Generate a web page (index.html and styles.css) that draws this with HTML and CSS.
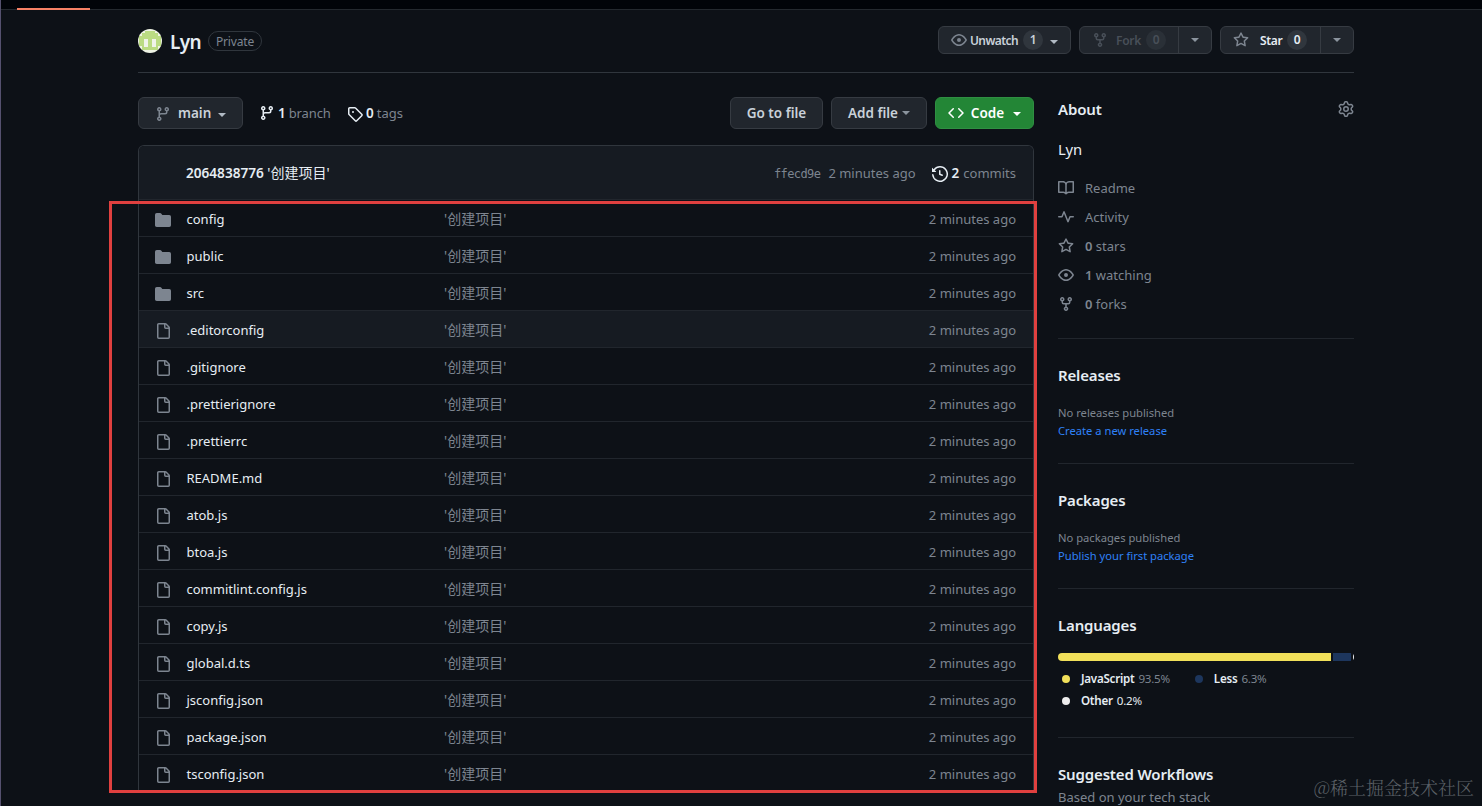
FILE: index.html
```html
<!DOCTYPE html>
<html lang="en">
<head>
<meta charset="utf-8">
<title>Lyn</title>
<link rel="stylesheet" href="styles.css">
</head>
<body>
<svg class="defs" aria-hidden="true">
  <symbol id="branch" viewBox="0 0 16 16"><path d="M9.5 3.25a2.25 2.25 0 1 1 3 2.122V6A2.5 2.5 0 0 1 10 8.5H6a1 1 0 0 0-1 1v1.128a2.251 2.251 0 1 1-1.5 0V5.372a2.25 2.25 0 1 1 1.5 0v1.836A2.493 2.493 0 0 1 6 7h4a1 1 0 0 0 1-1v-.628A2.25 2.25 0 0 1 9.5 3.25Zm-6 0a.75.75 0 1 0 1.5 0 .75.75 0 0 0-1.5 0Zm8.25-.75a.75.75 0 1 0 0 1.5.75.75 0 0 0 0-1.5ZM4.25 12a.75.75 0 1 0 0 1.5.75.75 0 0 0 0-1.5Z"/></symbol>
  <symbol id="tag" viewBox="0 0 16 16"><path d="M1 7.775V2.75C1 1.784 1.784 1 2.75 1h5.025c.464 0 .91.184 1.238.513l6.25 6.25a1.75 1.75 0 0 1 0 2.474l-5.026 5.026a1.75 1.75 0 0 1-2.474 0l-6.25-6.25A1.752 1.752 0 0 1 1 7.775Zm1.5 0c0 .066.026.13.073.177l6.25 6.25a.25.25 0 0 0 .354 0l5.025-5.025a.25.25 0 0 0 0-.354l-6.25-6.25a.25.25 0 0 0-.177-.073H2.75a.25.25 0 0 0-.25.25ZM6 5a1 1 0 1 1 0 2 1 1 0 0 1 0-2Z"/></symbol>
  <symbol id="fork" viewBox="0 0 16 16"><path d="M5 5.372v.878c0 .414.336.75.75.75h4.5a.75.75 0 0 0 .75-.75v-.878a2.25 2.25 0 1 1 1.5 0v.878a2.25 2.25 0 0 1-2.25 2.25h-1.5v2.128a2.251 2.251 0 1 1-1.5 0V8.5h-1.5A2.25 2.25 0 0 1 3.5 6.25v-.878a2.25 2.25 0 1 1 1.5 0ZM5 3.25a.75.75 0 1 0-1.5 0 .75.75 0 0 0 1.5 0Zm6.75.75a.75.75 0 1 0 0-1.5.75.75 0 0 0 0 1.5Zm-3 8.75a.75.75 0 1 0-1.5 0 .75.75 0 0 0 1.5 0Z"/></symbol>
  <symbol id="eye" viewBox="0 0 16 16"><path d="M8 2c1.981 0 3.671.992 4.933 2.078 1.27 1.091 2.187 2.345 2.637 3.023a1.62 1.62 0 0 1 0 1.798c-.45.678-1.367 1.932-2.637 3.023C11.67 13.008 9.981 14 8 14s-3.671-.992-4.933-2.078C1.797 10.83.88 9.576.43 8.898a1.62 1.62 0 0 1 0-1.798c.45-.677 1.367-1.931 2.637-3.022C4.33 2.992 6.019 2 8 2ZM1.679 7.932a.12.12 0 0 0 0 .136c.411.622 1.241 1.75 2.366 2.717C5.176 11.758 6.527 12.5 8 12.5s2.825-.742 3.955-1.715c1.124-.967 1.954-2.096 2.366-2.717a.12.12 0 0 0 0-.136c-.412-.621-1.242-1.75-2.366-2.717C10.824 4.242 9.473 3.5 8 3.5s-2.824.742-3.955 1.715c-1.124.967-1.954 2.096-2.366 2.717ZM8 10a2 2 0 1 1 0-4 2 2 0 0 1 0 4Z"/></symbol>
  <symbol id="star" viewBox="0 0 16 16"><path d="M8 .25a.75.75 0 0 1 .673.418l1.882 3.815 4.21.612a.75.75 0 0 1 .416 1.279l-3.046 2.97.719 4.192a.751.751 0 0 1-1.088.791L8 12.347l-3.766 1.98a.75.75 0 0 1-1.088-.79l.72-4.194L.818 6.374a.75.75 0 0 1 .416-1.28l4.21-.611L7.327.668A.75.75 0 0 1 8 .25Zm0 2.445L6.615 5.5a.75.75 0 0 1-.564.41l-3.097.45 2.24 2.184a.75.75 0 0 1 .216.664l-.528 3.084 2.769-1.456a.75.75 0 0 1 .698 0l2.77 1.456-.53-3.084a.75.75 0 0 1 .216-.664l2.24-2.183-3.096-.45a.75.75 0 0 1-.564-.41Z"/></symbol>
  <symbol id="code" viewBox="0 0 16 16"><path d="m11.28 3.22 4.25 4.25a.75.75 0 0 1 0 1.06l-4.25 4.25a.749.749 0 1 1-1.06-1.06L13.94 8l-3.72-3.72a.749.749 0 1 1 1.06-1.06Zm-6.56 0a.751.751 0 0 1 1.042.018.751.751 0 0 1 .018 1.042L2.06 8l3.72 3.72a.749.749 0 1 1-1.06 1.06L.47 8.53a.75.75 0 0 1 0-1.06Z"/></symbol>
  <symbol id="history" viewBox="0 0 16 16"><path d="m.427 1.927 1.215 1.215a8.002 8.002 0 1 1-1.6 5.685.75.75 0 1 1 1.493-.154 6.5 6.5 0 1 0 1.18-4.458l1.358 1.358A.25.25 0 0 1 3.896 6H.25A.25.25 0 0 1 0 5.75V2.104a.25.25 0 0 1 .427-.177ZM7.75 4a.75.75 0 0 1 .75.75v2.992l2.028.812a.75.75 0 0 1-.557 1.392l-2.5-1A.751.751 0 0 1 7 8.25v-3.5A.75.75 0 0 1 7.75 4Z"/></symbol>
  <symbol id="folder" viewBox="0 0 16 16"><path d="M1.75 1A1.75 1.75 0 0 0 0 2.75v10.5C0 14.216.784 15 1.75 15h12.5A1.75 1.75 0 0 0 16 13.25v-8.5A1.75 1.75 0 0 0 14.25 3H7.5a.25.25 0 0 1-.2-.1l-.9-1.2C6.07 1.26 5.55 1 5 1H1.75Z"/></symbol>
  <symbol id="file" viewBox="0 0 16 16"><path d="M2 1.75C2 .784 2.784 0 3.75 0h6.586c.464 0 .909.184 1.237.513l2.914 2.914c.329.328.513.773.513 1.237v9.586A1.75 1.75 0 0 1 13.25 16h-9.5A1.75 1.75 0 0 1 2 14.25Zm1.75-.25a.25.25 0 0 0-.25.25v12.5c0 .138.112.25.25.25h9.5a.25.25 0 0 0 .25-.25V6h-2.75A1.75 1.75 0 0 1 9 4.25V1.5Zm6.75.062V4.25c0 .138.112.25.25.25h2.688l-.011-.013-2.914-2.914-.013-.011Z"/></symbol>
  <symbol id="book" viewBox="0 0 16 16"><path d="M0 1.75A.75.75 0 0 1 .75 1h4.253c1.227 0 2.317.59 3 1.501A3.743 3.743 0 0 1 11.006 1h4.245a.75.75 0 0 1 .75.75v10.5a.75.75 0 0 1-.75.75h-4.507a2.25 2.25 0 0 0-1.591.659l-.622.621a.75.75 0 0 1-1.06 0l-.622-.621A2.25 2.25 0 0 0 5.258 13H.75a.75.75 0 0 1-.75-.75Zm7.251 10.324.004-5.073-.002-2.253A2.25 2.25 0 0 0 5.003 2.5H1.5v9h3.757a3.75 3.75 0 0 1 1.994.574ZM8.755 4.75l-.004 7.322a3.752 3.752 0 0 1 1.992-.572H14.5v-9h-3.495a2.25 2.25 0 0 0-2.25 2.25Z"/></symbol>
  <symbol id="pulse" viewBox="0 0 16 16"><path d="M6 2c.306 0 .582.187.696.471L10 10.731l1.304-3.26A.751.751 0 0 1 12 7h3.25a.75.75 0 0 1 0 1.5h-2.742l-1.812 4.528a.751.751 0 0 1-1.392 0L6 4.77 4.696 8.03A.75.75 0 0 1 4 8.5H.75a.75.75 0 0 1 0-1.5h2.742l1.812-4.529A.751.751 0 0 1 6 2Z"/></symbol>
  <symbol id="gear" viewBox="0 0 16 16"><path d="M8 0a8.2 8.2 0 0 1 .701.031C9.444.095 9.99.645 10.16 1.29l.288 1.107c.018.066.079.158.212.224.231.114.454.243.668.386.123.082.233.09.299.071l1.103-.303c.644-.176 1.392.021 1.82.63.27.385.506.792.704 1.218.315.675.111 1.422-.364 1.891l-.814.806c-.049.048-.098.147-.088.294.016.257.016.515 0 .772-.01.147.038.246.088.294l.814.806c.475.469.679 1.216.364 1.891a7.977 7.977 0 0 1-.704 1.217c-.428.61-1.176.807-1.82.63l-1.102-.302c-.067-.019-.177-.011-.3.071a5.909 5.909 0 0 1-.668.386c-.133.066-.194.158-.211.224l-.29 1.106c-.168.646-.715 1.196-1.458 1.26a8.006 8.006 0 0 1-1.402 0c-.743-.064-1.289-.614-1.458-1.26l-.289-1.106c-.018-.066-.079-.158-.212-.224a5.738 5.738 0 0 1-.668-.386c-.123-.082-.233-.09-.299-.071l-1.103.303c-.644.176-1.392-.021-1.82-.63a8.12 8.12 0 0 1-.704-1.218c-.315-.675-.111-1.422.363-1.891l.815-.806c.05-.048.098-.147.088-.294a6.214 6.214 0 0 1 0-.772c.01-.147-.038-.246-.088-.294l-.815-.806C.635 6.045.431 5.298.746 4.623a7.92 7.92 0 0 1 .704-1.217c.428-.61 1.176-.807 1.82-.63l1.102.302c.067.019.177.011.3-.071.214-.143.437-.272.668-.386.133-.066.194-.158.211-.224l.29-1.106C6.009.645 6.556.095 7.299.03 7.53.01 7.764 0 8 0Zm-.571 1.525c-.036.003-.108.036-.137.146l-.289 1.105c-.147.561-.549.967-.998 1.189-.173.086-.34.183-.5.29-.417.278-.97.423-1.529.27l-1.103-.303c-.109-.03-.175.016-.195.045-.22.312-.412.644-.573.99-.014.031-.021.11.059.19l.815.806c.411.406.562.957.53 1.456a4.709 4.709 0 0 0 0 .582c.032.499-.119 1.05-.53 1.456l-.815.806c-.081.08-.073.159-.059.19.162.346.353.677.573.989.02.03.085.076.195.046l1.102-.303c.56-.153 1.113-.008 1.53.27.161.107.328.204.501.29.447.222.85.629.997 1.189l.289 1.105c.029.109.101.143.137.146a6.6 6.6 0 0 0 1.142 0c.036-.003.108-.036.137-.146l.289-1.105c.147-.561.549-.967.998-1.189.173-.086.34-.183.5-.29.417-.278.97-.423 1.529-.27l1.103.303c.109.029.175-.016.195-.045.22-.313.411-.644.573-.99.014-.031.021-.11-.059-.19l-.815-.806c-.411-.406-.562-.957-.53-1.456a4.709 4.709 0 0 0 0-.582c-.032-.499.119-1.05.53-1.456l.815-.806c.081-.08.073-.159.059-.19a6.464 6.464 0 0 0-.573-.989c-.02-.03-.085-.076-.195-.046l-1.102.303c-.56.153-1.113.008-1.53-.27a4.44 4.44 0 0 0-.501-.29c-.447-.222-.85-.629-.997-1.189l-.289-1.105c-.029-.11-.101-.143-.137-.146a6.6 6.6 0 0 0-1.142 0ZM11 8a3 3 0 1 1-6 0 3 3 0 0 1 6 0ZM9.5 8a1.5 1.5 0 1 0-3.001.001A1.5 1.5 0 0 0 9.5 8Z"/></symbol>
</svg>

<div class="topbar"><span class="active-tab"></span></div>

<div class="page">
  <header class="repo-head">
    <svg class="avatar" viewBox="0 0 24 24"><circle cx="12" cy="12" r="12" fill="#eef3e4"/><path d="M4 4h3V2h10v2h3v3h3v10h-3v4H4v-4H1V7h3Z" fill="#bbdb83"/><path d="M6 10h4v8H6zM14 10h4v8h-4z" fill="#f0f3ea"/></svg>
    <h1>Lyn</h1>
    <span class="label">Private</span>
    <div class="actions">
      <div class="btn sm watch"><svg class="icon"><use href="#eye"/></svg><span>Unwatch</span><b class="count">1</b><i class="caret"></i></div>
      <div class="btn sm split forks"><div class="part"><svg class="icon"><use href="#fork"/></svg><span>Fork</span><b class="count">0</b></div><div class="drop"><i class="caret"></i></div></div>
      <div class="btn sm split stars"><div class="part"><svg class="icon"><use href="#star"/></svg><span>Star</span><b class="count">0</b></div><div class="drop"><i class="caret"></i></div></div>
    </div>
  </header>

  <div class="columns">
    <main>
      <div class="toolbar">
        <div class="btn main-branch"><svg class="icon"><use href="#branch"/></svg><span>main</span><i class="caret"></i></div>
        <div class="ref branches"><svg class="icon"><use href="#branch"/></svg><b>1</b><span>branch</span></div>
        <div class="ref tags"><svg class="icon"><use href="#tag"/></svg><b>0</b><span>tags</span></div>
        <div class="btn goto">Go to file</div>
        <div class="btn add">Add file<i class="caret"></i></div>
        <div class="btn green"><svg class="icon"><use href="#code"/></svg><span>Code</span><i class="caret"></i></div>
      </div>

      <div class="frame">
        <div class="files">
          <div class="commit"><div class="who"><b>2064838776</b> <span>'创建项目'</span></div><code>ffecd9e</code><span class="when">2 minutes ago</span><svg class="icon"><use href="#history"/></svg><b class="num">2</b><span class="commits">commits</span></div>
          <div class="row"><svg class="icon folder"><use href="#folder"/></svg><span class="name">config</span><span class="msg">'创建项目'</span><span class="time">2 minutes ago</span></div>
          <div class="row"><svg class="icon folder"><use href="#folder"/></svg><span class="name">public</span><span class="msg">'创建项目'</span><span class="time">2 minutes ago</span></div>
          <div class="row"><svg class="icon folder"><use href="#folder"/></svg><span class="name">src</span><span class="msg">'创建项目'</span><span class="time">2 minutes ago</span></div>
          <div class="row hover"><svg class="icon"><use href="#file"/></svg><span class="name">.editorconfig</span><span class="msg">'创建项目'</span><span class="time">2 minutes ago</span></div>
          <div class="row"><svg class="icon"><use href="#file"/></svg><span class="name">.gitignore</span><span class="msg">'创建项目'</span><span class="time">2 minutes ago</span></div>
          <div class="row"><svg class="icon"><use href="#file"/></svg><span class="name">.prettierignore</span><span class="msg">'创建项目'</span><span class="time">2 minutes ago</span></div>
          <div class="row"><svg class="icon"><use href="#file"/></svg><span class="name">.prettierrc</span><span class="msg">'创建项目'</span><span class="time">2 minutes ago</span></div>
          <div class="row"><svg class="icon"><use href="#file"/></svg><span class="name">README.md</span><span class="msg">'创建项目'</span><span class="time">2 minutes ago</span></div>
          <div class="row"><svg class="icon"><use href="#file"/></svg><span class="name">atob.js</span><span class="msg">'创建项目'</span><span class="time">2 minutes ago</span></div>
          <div class="row"><svg class="icon"><use href="#file"/></svg><span class="name">btoa.js</span><span class="msg">'创建项目'</span><span class="time">2 minutes ago</span></div>
          <div class="row"><svg class="icon"><use href="#file"/></svg><span class="name">commitlint.config.js</span><span class="msg">'创建项目'</span><span class="time">2 minutes ago</span></div>
          <div class="row"><svg class="icon"><use href="#file"/></svg><span class="name">copy.js</span><span class="msg">'创建项目'</span><span class="time">2 minutes ago</span></div>
          <div class="row"><svg class="icon"><use href="#file"/></svg><span class="name">global.d.ts</span><span class="msg">'创建项目'</span><span class="time">2 minutes ago</span></div>
          <div class="row"><svg class="icon"><use href="#file"/></svg><span class="name">jsconfig.json</span><span class="msg">'创建项目'</span><span class="time">2 minutes ago</span></div>
          <div class="row"><svg class="icon"><use href="#file"/></svg><span class="name">package.json</span><span class="msg">'创建项目'</span><span class="time">2 minutes ago</span></div>
          <div class="row"><svg class="icon"><use href="#file"/></svg><span class="name">tsconfig.json</span><span class="msg">'创建项目'</span><span class="time">2 minutes ago</span></div>
        </div>
        <div class="highlight"></div>
      </div>
    </main>

    <aside>
      <section class="about">
        <div class="about-head"><h2>About</h2><svg class="icon"><use href="#gear"/></svg></div>
        <p class="desc">Lyn</p>
        <ul class="stats">
          <li><svg class="icon"><use href="#book"/></svg><span>Readme</span></li>
          <li><svg class="icon"><use href="#pulse"/></svg><span>Activity</span></li>
          <li><svg class="icon"><use href="#star"/></svg><span><b>0</b> stars</span></li>
          <li><svg class="icon"><use href="#eye"/></svg><span><b>1</b> watching</span></li>
          <li><svg class="icon"><use href="#fork"/></svg><span><b>0</b> forks</span></li>
        </ul>
      </section>
      <section class="mid"><h2>Releases</h2><p class="small">No releases published</p><a class="small">Create a new release</a></section>
      <section class="mid"><h2>Packages</h2><p class="small">No packages published</p><a class="small">Publish your first package</a></section>
      <section class="langs">
        <h2>Languages</h2>
        <div class="bar"><span class="js"></span><span class="less"></span><span class="other"></span></div>
        <ul class="legend">
          <li><i class="dot js"></i><b>JavaScript</b><span>93.5%</span></li>
          <li><i class="dot less"></i><b>Less</b><span>6.3%</span></li>
          <li class="bright"><i class="dot other"></i><b>Other</b><span>0.2%</span></li>
        </ul>
      </section>
      <section class="flows"><h2>Suggested Workflows</h2><p>Based on your tech stack</p></section>
    </aside>
  </div>
</div>
<div class="watermark">@稀土掘金技术社区</div>
</body>
</html>
```

FILE: styles.css
```css
* { box-sizing: border-box; margin: 0; padding: 0; }
html, body { height: 806px; overflow: hidden; }
body {
  position: relative;
  background: #0d1117;
  border-left: 1px solid #55516f;
  color: #e6edf3;
  font: 13px/20px "Noto Sans", "Noto Sans CJK SC", sans-serif;
}
b, h1, h2 { font-weight: 600; }
i { font-style: normal; }
ul { list-style: none; }
.defs { display: none; }
.icon { width: 16px; height: 16px; flex: none; fill: #7d8590; }
.topbar { height: 10px; background: #010409; border-bottom: 1px solid #24292f; padding: 8px 0 0 16px; }
.active-tab { display: block; width: 73px; height: 2px; background: #f78166; }
.page { width: 1216px; margin-left: 137px; }

.repo-head { height: 63px; border-bottom: 1px solid #30363d; display: flex; align-items: center; }
.avatar { width: 24px; height: 24px; margin-right: 8px; }
.repo-head h1 { font-size: 19px; line-height: 30px; letter-spacing: -0.6px; width: 38px; padding-top: 1px; }
.label { height: 20px; width: 54px; border: 1px solid #30363d; border-radius: 10px; font-size: 12px; letter-spacing: -0.15px; line-height: 19px; text-align: center; color: #7d8590; }
.actions { display: flex; margin-left: auto; gap: 8px; margin-bottom: 2px; }

.btn { height: 32px; border: 1px solid #363b42; border-radius: 6px; background: #21262d; color: #c9d1d9; font-size: 13.5px; font-weight: 600; display: flex; align-items: center; justify-content: center; }
.btn.sm { height: 28px; font-size: 12px; letter-spacing: -0.3px; }
.btn.sm span { padding-top: 1px; }
.caret { border: 4px solid transparent; border-top-color: #b1bac4; border-bottom: 0; flex: none; }
.count { width: 20px; height: 20px; border-radius: 10px; background: #30363d; text-align: center; line-height: 20px; font-weight: 600; flex: none; }
.watch { justify-content: flex-start; width: 133px; padding-left: 12px; }
.watch span { width: 50px; margin: 0 3px; letter-spacing: -0.6px; }
.watch .caret { margin: 3px 0 0 7px; }
.split { justify-content: flex-start; }
.part { display: flex; align-items: center; height: 26px; border-right: 1px solid #363b42; }
.forks { width: 133px; }
.forks .part { width: 99px; padding-left: 12px; color: #484f58; }
.forks .part .icon { fill: #484f58; margin-right: 8px; }
.forks .part span { width: 30px; }
.forks .count { background: #2a3037; }
.stars { width: 134px; }
.stars .part { width: 100px; padding-left: 12px; color: #e6edf3; }
.stars .part .icon { margin-right: 11px; }
.stars .part span { width: 27px; }
.drop { flex: 1; display: flex; justify-content: center; }
.drop .caret { border-top-color: #8b949e; }

.columns { display: grid; grid-template-columns: 896px 296px; column-gap: 24px; padding-top: 24px; }
.toolbar { display: flex; align-items: center; height: 32px; margin-bottom: 16px; }
.main-branch { width: 105px; margin-right: 16px; justify-content: flex-start; padding-left: 16px; }
.main-branch span { margin: 0 7px; width: 33px; }
.main-branch .icon { margin-top: 2px; }
.main-branch .caret { margin-top: 3px; }
.ref { display: flex; align-items: center; color: #7d8590; }
.ref .icon { fill: #e6edf3; margin-right: 3px; }
.ref b, .ref span { padding-bottom: 1px; }
.ref b { color: #e6edf3; margin-right: 3px; font-size: 13.5px; }
.branches { width: 88px; letter-spacing: -0.1px; }
.tags .icon { margin-top: 2px; }
.goto { width: 93px; margin-left: auto; }
.add { width: 96px; margin: 0 8px; }
.add .caret { margin-left: 4px; border-top-color: #8b949e; }
.green { width: 99px; background: #238636; border-color: #2f8f42; color: #fff; }
.green .icon { fill: #fff; margin-right: 7px; }
.green .caret { margin-left: 9px; border-top-color: #fff; margin-top: 2px; }

.frame { position: relative; }
.files { border: 1px solid #30363d; border-radius: 6px 6px 0 0; border-bottom: 0; overflow: hidden; }
.commit { height: 53px; padding: 0 17px 0 47px; background: #161b22; display: flex; align-items: center; color: #7d8590; }
.who { color: #e6edf3; margin-right: auto; font-size: 13.6px; }
.who span { font-size: 14px; }
.commit code { font: 12px/20px "DejaVu Sans Mono", monospace; letter-spacing: -0.6px; margin-right: 8px; padding-top: 2px; }
.commit .icon { fill: #e6edf3; margin: 2px 4px 0 16px; }
.commit .num { color: #e6edf3; margin-right: 4px; font-size: 13.5px; }
.row { display: grid; grid-template-columns: 31.5px 257.5px 1fr auto; align-items: center; height: 37px; border-top: 1px solid #21262d; padding: 1px 17px 0 16px; color: #7d8590; }
.row.hover { background: #161b22; }
.row .icon { margin-top: 2px; }
.name { color: #e6edf3; }
.msg { font-size: 14px; }
.highlight { position: absolute; left: -29px; top: 56px; width: 928px; height: 592px; border: 3px solid #e0403f; }

h2 { font-size: 15px; line-height: 24px; letter-spacing: -0.15px; }
.about { height: 241px; }
.about-head { display: flex; justify-content: space-between; align-items: center; height: 24px; padding-top: 0; }
.desc { font-size: 14.8px; line-height: 24px; margin: 16px 0 12px; letter-spacing: -0.2px; }
.stats li { display: flex; align-items: center; height: 29px; color: #7d8590; gap: 11px; }
.stats .icon { margin-top: 1px; }
aside section + section { border-top: 1px solid #21262d; padding-top: 24px; }
.mid { height: 125px; }
.small { display: block; font-size: 11.2px; line-height: 18px; }
p.small { margin-top: 17px; color: #7d8590; }
a.small { color: #2f81f7; }
.langs { height: 149px; }
.bar { display: flex; gap: 2px; height: 8px; border-radius: 6px; overflow: hidden; margin: 16px 0 7px; }
.bar .js { width: 273px; }
.bar .less { width: 18px; }
.bar .other { flex: 1; }
.js { background: #f1e05a; }
.less { background: #1d365d; }
.other { background: #ededed; }
.legend { display: flex; flex-wrap: wrap; font-size: 11.6px; letter-spacing: -0.25px; color: #7d8590; }
.legend li { display: flex; align-items: center; height: 22px; margin-right: 21px; }
.legend b { color: #e6edf3; margin-right: 4px; }
.legend .bright { color: #e6edf3; }
.dot { width: 8px; height: 8px; border-radius: 50%; margin: 0 11px 0 4px; }
.flows p { color: #7d8590; line-height: 20px; padding-top: 1px; }
.watermark { position: absolute; right: 8px; top: 775px; font: 18px/24px "Noto Serif CJK SC", "Noto Sans CJK SC", serif; font-weight: 300; color: #5c6167; }
```
